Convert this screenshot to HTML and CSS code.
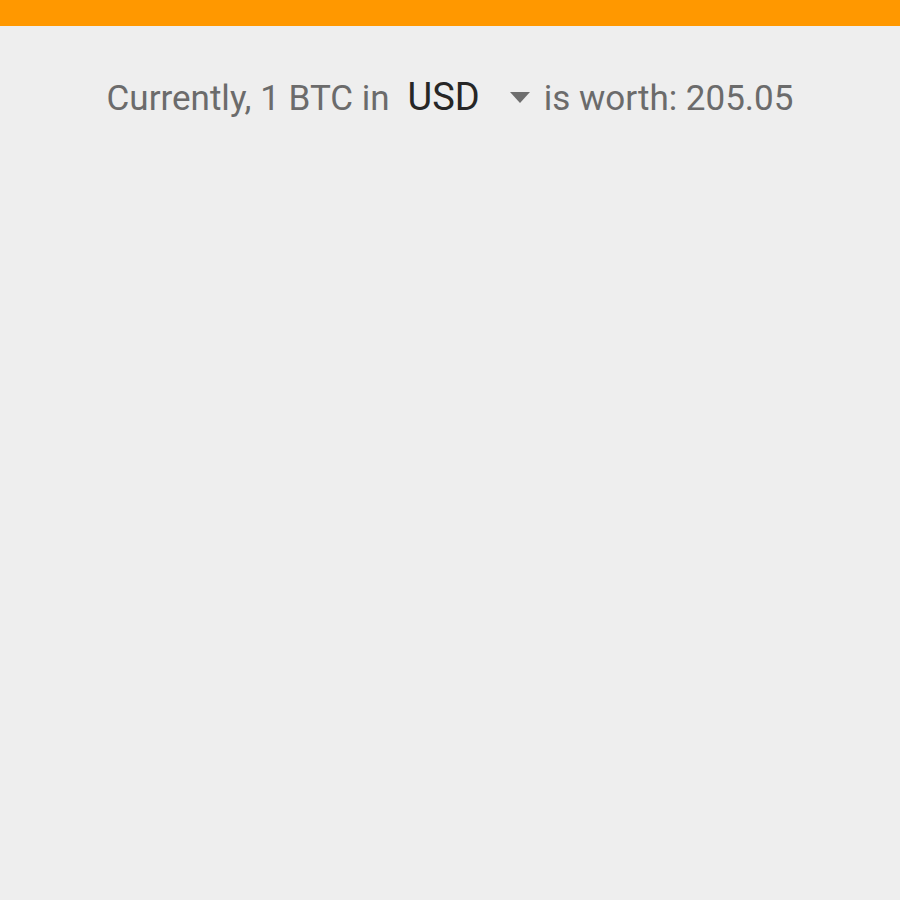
FILE: index.html
```html
<!DOCTYPE html>
<html lang="en">
   <head>
      <meta charset="utf-8">
      <title>BTC price</title>
      <link rel="stylesheet" href="styles.css">
   </head>
   <body>
      <div class="toolbar"></div>
      <p class="rate">
         <span>Currently, 1 BTC in</span>
         <span class="dropdown">
            <span class="dropdown-value">USD</span>
            <svg class="dropdown-arrow" viewBox="0 0 20 11" width="20" height="11"><path d="M0 0h20L10 11z" fill="#6e6e6e"/></svg>
         </span>
         <span>is worth: 205.05</span>
      </p>
   </body>
</html>
```
FILE: styles.css
```css
body {
   margin: 0;
   background-color: #eeeeee;
   font-family: Roboto, "Liberation Sans", sans-serif;
}
.toolbar {
   height: 26px;
   background-color: #ff9800;
}
.rate {
   display: flex;
   justify-content: center;
   align-items: baseline;
   gap: 14px;
   margin: 49px 0 0;
   font-size: 35px;
   color: #6b6b6b;
}
.dropdown {
   display: flex;
   align-items: center;
   gap: 30px;
   margin-left: 4px;
}
.dropdown-value {
   font-size: 38px;
   color: #262626;
}
```
